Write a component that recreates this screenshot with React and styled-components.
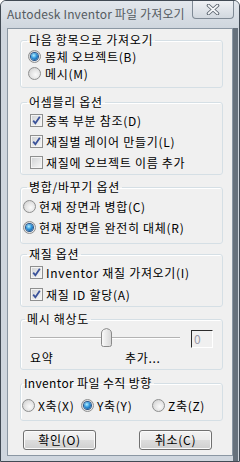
import React from "react";
import styled, { createGlobalStyle } from "styled-components";

const GlobalStyle = createGlobalStyle`
  html, body {
    margin: 0;
    padding: 0;
    background: #ffffff;
  }
  body {
    font-family: "Noto Sans CJK KR", "Noto Sans", sans-serif;
    font-size: 12px;
    letter-spacing: 0.7px;
    color: #000;
  }
`;

export default function App() {
  return (
    <>
      <GlobalStyle />
      <Window>
        <TitleBar>
          <Title>Autodesk Inventor 파일 가져오기</Title>
          <CloseButton>
            <svg width="14" height="11" viewBox="0 0 14 11">
              <path d="M2.5 1.5 L11.5 9.5 M11.5 1.5 L2.5 9.5" stroke="#5d6670" strokeWidth="3.6" strokeLinecap="round" />
              <path d="M2.5 1.5 L11.5 9.5 M11.5 1.5 L2.5 9.5" stroke="#f5f7f9" strokeWidth="1.7" strokeLinecap="round" />
            </svg>
          </CloseButton>
        </TitleBar>
        <Frame>
          <Client>
            {/* import as */}
            <Group>
              <Legend>다음 항목으로 가져오기</Legend>
              <GroupBody $pt={0} $pb={5} $pl={7}>
                <Row>
                  <Radio $checked />
                  <Label $gap={4}>몸체 오브젝트(B)</Label>
                </Row>
                <Row>
                  <Radio />
                  <Label $gap={4}>메시(M)</Label>
                </Row>
              </GroupBody>
            </Group>

            <Group $mt={6}>
              <Legend>어셈블리 옵션</Legend>
              <GroupBody $pt={2} $pb={3} $pl={9} $gap={4}>
                <Row>
                  <Check $checked />
                  <Label $gap={3}>중복 부분 참조(D)</Label>
                </Row>
                <Row>
                  <Check $checked />
                  <Label $gap={3}>재질별 레이어 만들기(L)</Label>
                </Row>
                <Row>
                  <Check />
                  <Label $gap={3}>재질에 오브젝트 이름 추가</Label>
                </Row>
              </GroupBody>
            </Group>

            <Group $mt={4}>
              <Legend>병합/바꾸기 옵션</Legend>
              <GroupBody $pt={3} $pb={7} $pl={2} $gap={4}>
                <Row>
                  <Radio />
                  <Label $gap={3}>현재 장면과 병합(C)</Label>
                </Row>
                <Row>
                  <Radio $checked />
                  <Label $gap={3}>현재 장면을 완전히 대체(R)</Label>
                </Row>
              </GroupBody>
            </Group>

            <Group $mt={2}>
              <Legend>재질 옵션</Legend>
              <GroupBody $pt={2} $pb={3} $pl={9} $gap={5}>
                <Row>
                  <Check $checked />
                  <Label $gap={3}>Inventor 재질 가져오기(I)</Label>
                </Row>
                <Row>
                  <Check $checked />
                  <Label $gap={3}>재질 ID 할당(A)</Label>
                </Row>
              </GroupBody>
            </Group>

            <Group $mt={4}>
              <Legend $ml={4}>메시 해상도</Legend>
              <GroupBody $pt={1} $pb={3} $pl={9} $gap={2}>
                <SliderRow>
                  <Slider>
                    <Track />
                    <Thumb style={{ left: 71 }}>
                      <svg width="11" height="19" viewBox="0 0 11 19">
                        <defs>
                          <linearGradient id="tg" x1="0" y1="0" x2="1" y2="0">
                            <stop offset="0" stopColor="#fbfbfb" />
                            <stop offset="1" stopColor="#d6d6d6" />
                          </linearGradient>
                        </defs>
                        <path
                          d="M0.5 5 Q0.5 3 2.5 1.5 L5.5 0.5 L8.5 1.5 Q10.5 3 10.5 5 V16.5 Q10.5 18.5 8.5 18.5 H2.5 Q0.5 18.5 0.5 16.5 Z"
                          fill="url(#tg)"
                          stroke="#8a8a8a"
                        />
                      </svg>
                    </Thumb>
                  </Slider>
                  <ValueBox>0</ValueBox>
                </SliderRow>
                <ScaleLabels>
                  <span>요약</span>
                  <span>추가...</span>
                </ScaleLabels>
              </GroupBody>
            </Group>

            <Group $mt={5}>
              <Legend $ml={1} $tight>Inventor 파일 수직 방향</Legend>
              <GroupBody $pt={6} $pb={6} $pl={1}>
                <AxisRow>
                  <Row>
                    <Radio />
                    <Label $gap={3}>X축(X)</Label>
                  </Row>
                  <Row>
                    <Radio $checked />
                    <Label $gap={3}>Y축(Y)</Label>
                  </Row>
                  <Row>
                    <Radio />
                    <Label $gap={3}>Z축(Z)</Label>
                  </Row>
                </AxisRow>
              </GroupBody>
            </Group>

            <Buttons>
              <Button>확인(O)</Button>
              <Button>취소(C)</Button>
            </Buttons>
          </Client>
        </Frame>
      </Window>
    </>
  );
}

const Window = styled.div`
  width: 240px;
  height: 462px;
  box-sizing: border-box;
  border: 1px solid #414a54;
  border-radius: 6px 6px 0 0;
  background: #cfd6de;
  display: flex;
  flex-direction: column;
  overflow: hidden;
`;

const TitleBar = styled.div`
  height: 27px;
  flex: none;
  display: flex;
  align-items: flex-start;
  background: linear-gradient(#e2e7ec, #cfd6de);
`;

const Title = styled.div`
  padding: 5px 0 0 6px;
  line-height: 16px;
  letter-spacing: 0.15px;
  color: #555b61;
  white-space: nowrap;
`;

const CloseButton = styled.div`
  margin-left: auto;
  margin-right: 5px;
  width: 42px;
  height: 18px;
  flex: none;
  box-sizing: border-box;
  border: 1px solid #7f8a95;
  border-top: none;
  border-radius: 0 0 4px 4px;
  background: linear-gradient(#eef1f4, #d2d8df);
  display: flex;
  align-items: center;
  justify-content: center;
`;

const Frame = styled.div`
  flex: 1;
  display: flex;
  padding: 0 6px 5px 6px;
  background: linear-gradient(
    to right,
    #cfd6de calc(100% - 6px),
    #66717c calc(100% - 6px),
    #66717c calc(100% - 1px),
    #cfd6de calc(100% - 1px)
  );
`;

const Client = styled.div`
  flex: 1;
  border: 1px solid #8b97a3;
  background: #f0f0f0;
  padding: 3px 9px 0 12px;
  display: flex;
  flex-direction: column;
`;

const Group = styled.fieldset`
  margin: ${({ $mt }) => $mt || 0}px 0 0 0;
  padding: 0;
  min-width: 0;
  border: 1px solid #d5dfe5;
  border-radius: 3px;
  box-shadow: inset 1px 1px 0 #ffffff;
`;

const Legend = styled.legend`
  margin-left: ${({ $ml }) => ($ml === undefined ? 6 : $ml)}px;
  padding: 0 2px;
  line-height: 16px;
  letter-spacing: ${({ $tight }) => ($tight ? 0.35 : 0.7)}px;
  color: #000;
`;

const GroupBody = styled.div`
  display: flex;
  flex-direction: column;
  gap: ${({ $gap }) => $gap || 0}px;
  padding: ${({ $pt }) => $pt}px 0 ${({ $pb }) => $pb}px ${({ $pl }) => $pl}px;
`;

const Row = styled.div`
  height: 17px;
  display: flex;
  align-items: center;
`;

const Label = styled.span`
  margin-left: ${({ $gap }) => $gap}px;
  line-height: 16px;
  white-space: nowrap;
`;

const Radio = styled.span`
  position: relative;
  flex: none;
  width: 13px;
  height: 13px;
  box-sizing: border-box;
  border-radius: 50%;
  border: 1px solid #8e8f8f;
  background: radial-gradient(circle at 60% 60%, #fafafa 0, #e6e6e6 45%, #c9c9c9 100%);

  &::after {
    content: "";
    display: ${({ $checked }) => ($checked ? "block" : "none")};
    position: absolute;
    left: 2px;
    top: 2px;
    width: 7px;
    height: 7px;
    border-radius: 50%;
    background: radial-gradient(circle at 40% 35%, #b5f0ff 0, #2f95dc 45%, #0b3f7c 100%);
    box-shadow: 0 0 0 1px #27558a;
  }
`;

const CheckBox = styled.span`
  flex: none;
  width: 13px;
  height: 13px;
  box-sizing: border-box;
  border: 1px solid #8e8f8f;
  background: linear-gradient(135deg, #cfd1d3, #f9f9f9);
  box-shadow: inset 0 0 0 1px #f4f4f4;
  display: flex;
  align-items: center;
  justify-content: center;
`;

const Check = ({ $checked }) => (
  <CheckBox>
    {$checked && (
      <svg width="11" height="11" viewBox="0 0 11 11">
        <path d="M2.2 5.6 L4.4 8.3 L8.8 1.8" fill="none" stroke="#3a529a" strokeWidth="1.8" />
      </svg>
    )}
  </CheckBox>
);

const SliderRow = styled.div`
  height: 20px;
  display: flex;
  align-items: flex-start;
`;

const Slider = styled.div`
  position: relative;
  width: 150px;
  height: 20px;
`;

const Track = styled.div`
  margin-top: 9px;
  height: 1px;
  background: #b3b3b3;
  border-bottom: 1px solid #ffffff;
`;

const Thumb = styled.div`
  position: absolute;
  top: 0;
  width: 11px;
  height: 19px;
  line-height: 0;
`;

const ValueBox = styled.div`
  margin: 2px 0 0 11px;
  width: 22px;
  height: 18px;
  box-sizing: border-box;
  border-top: 1px solid #2b2b2b;
  border-left: 1px solid #2b2b2b;
  border-right: 1px solid #ffffff;
  border-bottom: 1px solid #ffffff;
  background: #f0f0f0;
  color: #9a9aa8;
  padding-left: 2px;
  line-height: 15px;
`;

const ScaleLabels = styled.div`
  height: 16px;
  line-height: 16px;
  display: grid;
  grid-template-columns: 95px auto;
`;

const AxisRow = styled.div`
  display: grid;
  grid-template-columns: 59px 71px auto;
`;

const Buttons = styled.div`
  margin-top: 9px;
  padding: 0 11px 0 3px;
  display: flex;
  justify-content: space-between;
`;

const Button = styled.button`
  width: 73px;
  height: 20px;
  box-sizing: border-box;
  padding: 0;
  border: 1px solid #707070;
  border-radius: 3px;
  background: linear-gradient(#f3f3f3 0%, #ebebeb 48%, #dddddd 52%, #cfcfcf 100%);
  box-shadow: inset 0 0 0 1px #fbfbfb;
  font-family: "Noto Sans CJK KR", "Noto Sans", sans-serif;
  font-size: 12px;
  letter-spacing: 0.7px;
  line-height: 16px;
  color: #000;
`;
